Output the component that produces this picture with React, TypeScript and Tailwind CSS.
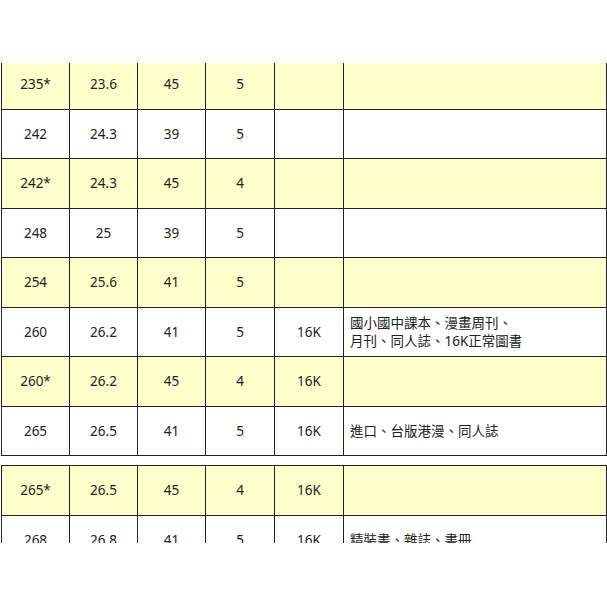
import React from 'react';

type Row = {
  size: string;
  cm: string;
  a: string;
  b: string;
  k?: string;
  note?: React.ReactNode;
  hl?: boolean;
};

const FIRST: Row[] = [
  { size: '235*', cm: '23.6', a: '45', b: '5', hl: true },
  { size: '242', cm: '24.3', a: '39', b: '5' },
  { size: '242*', cm: '24.3', a: '45', b: '4', hl: true },
  { size: '248', cm: '25', a: '39', b: '5' },
  { size: '254', cm: '25.6', a: '41', b: '5', hl: true },
  {
    size: '260',
    cm: '26.2',
    a: '41',
    b: '5',
    k: '16K',
    note: (
      <>
        國小國中課本、漫畫周刊、
        <br />
        月刊、同人誌、16K正常圖書
      </>
    ),
  },
  { size: '260*', cm: '26.2', a: '45', b: '4', k: '16K', hl: true },
  { size: '265', cm: '26.5', a: '41', b: '5', k: '16K', note: '進口、台版港漫、同人誌' },
];

const SECOND: Row[] = [
  { size: '265*', cm: '26.5', a: '45', b: '4', k: '16K', hl: true },
  { size: '268', cm: '26.8', a: '41', b: '5', k: '16K', note: '精裝書、雜誌、書冊' },
];

function SizeTable({ rows }: { rows: Row[] }) {
  const cell = 'border border-[#222] text-center align-middle';
  return (
    <table className="table-fixed border-collapse w-[606px] ml-[1px] text-[13.5px] leading-[18px] text-[#222]">
      <colgroup>
        <col className="w-[68px]" />
        <col className="w-[68px]" />
        <col className="w-[68px]" />
        <col className="w-[69px]" />
        <col className="w-[69px]" />
        <col />
      </colgroup>
      <tbody>
        {rows.map((r) => (
          <tr key={r.size} className={`h-[49.5px] ${r.hl ? 'bg-[#ffffcc]' : 'bg-white'}`}>
            <td className={cell}>{r.size}</td>
            <td className={cell}>{r.cm}</td>
            <td className={cell}>{r.a}</td>
            <td className={cell}>{r.b}</td>
            <td className={cell}>{r.k}</td>
            <td className="border border-[#222] text-left align-middle pl-[6px]">{r.note}</td>
          </tr>
        ))}
      </tbody>
    </table>
  );
}

export default function App() {
  return (
    <div
      className="w-[607px] h-[607px] bg-white pt-[63px]"
      style={{ fontFamily: '"Noto Sans", "Noto Sans CJK TC", sans-serif' }}
    >
      <div className="h-[480px] overflow-hidden">
        <div className="-mt-[4px]">
          <SizeTable rows={FIRST} />
          <div className="h-[9px]" />
          <SizeTable rows={SECOND} />
        </div>
      </div>
    </div>
  );
}
